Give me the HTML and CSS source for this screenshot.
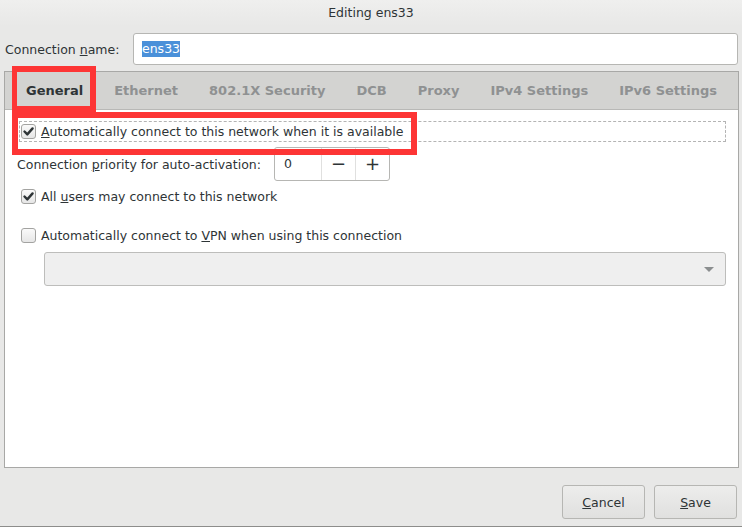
FILE: index.html
```html
<!DOCTYPE html>
<html lang="en">
<head>
    <meta charset="UTF-8">
    <title>Editing ens33</title>
    <link rel="stylesheet" href="styles.css">
</head>
<body>
    <div class="window">
        <div class="titlebar">Editing ens33</div>

        <div class="name-row">
            <label class="name-label" for="connName">Connection <u>n</u>ame:</label>
            <div class="entry"><span class="selected">ens33</span></div>
        </div>

        <div class="notebook">
            <div class="tabs">
                <div class="tab active">General</div>
                <div class="tab">Ethernet</div>
                <div class="tab">802.1X Security</div>
                <div class="tab">DCB</div>
                <div class="tab">Proxy</div>
                <div class="tab">IPv4 Settings</div>
                <div class="tab">IPv6 Settings</div>
            </div>

            <div class="page">
                <div class="check-row focused">
                    <span class="checkbox checked">
                        <svg width="13" height="13" viewBox="0 0 13 13"><path d="M2.5 6.5 L5.3 9.4 L10.6 3.4" fill="none" stroke="#2e3436" stroke-width="2.4" stroke-linecap="round" stroke-linejoin="round"/></svg>
                    </span>
                    <span><u>A</u>utomatically connect to this network when it is available</span>
                </div>

                <div class="priority-row">
                    <span>Connection <u>p</u>riority for auto-activation:</span>
                    <div class="spin">
                        <span class="spin-value">0</span>
                        <span class="spin-btn">&minus;</span>
                        <span class="spin-btn">+</span>
                    </div>
                </div>

                <div class="check-row users-row">
                    <span class="checkbox checked">
                        <svg width="13" height="13" viewBox="0 0 13 13"><path d="M2.5 6.5 L5.3 9.4 L10.6 3.4" fill="none" stroke="#2e3436" stroke-width="2.4" stroke-linecap="round" stroke-linejoin="round"/></svg>
                    </span>
                    <span>All <u>u</u>sers may connect to this network</span>
                </div>

                <div class="check-row vpn-row">
                    <span class="checkbox"></span>
                    <span>Automatically connect to <u>V</u>PN when using this connection</span>
                </div>

                <div class="combo">
                    <span class="combo-arrow"></span>
                </div>
            </div>
        </div>

        <div class="actions">
            <button class="btn"><u>C</u>ancel</button>
            <button class="btn"><u>S</u>ave</button>
        </div>

        <!-- annotation boxes drawn over the dialog -->
        <div class="mark mark-tab"></div>
        <div class="mark mark-row"></div>
    </div>
</body>
</html>
```

FILE: styles.css
```css
body {
    margin: 0;
    background-color: #e8e8e7;
    font-family: "DejaVu Sans", sans-serif;
    font-size: 12.5px;
    color: #2e3436;
}

.window {
    position: relative;
    width: 742px;
    height: 527px;
    box-sizing: border-box;
    border-bottom: 1px solid #8d8d8b;
    display: flex;
    flex-direction: column;
    overflow: hidden;
}

.titlebar {
    height: 26px;
    line-height: 26px;
    text-align: center;
    background: linear-gradient(#efefee, #e8e8e7);
}

.name-row {
    display: flex;
    align-items: center;
    padding: 7px 4px 0 5px;
}

.name-label {
    width: 128px;
}

.entry {
    flex: 1;
    height: 32px;
    box-sizing: border-box;
    border: 1px solid #b6b6b3;
    border-radius: 3px;
    background-color: #fff;
    display: flex;
    align-items: center;
    padding-left: 8px;
}

.selected {
    background-color: #4a90d9;
    color: #fff;
    line-height: 16px;
}

.notebook {
    margin: 6px 3px 0 4px;
    height: 397px;
    box-sizing: border-box;
    border: 1px solid #a8a8a6;
    display: flex;
    flex-direction: column;
}

.tabs {
    height: 38px;
    box-sizing: border-box;
    background-color: #d3d3d1;
    border-bottom: 1px solid #b8b8b6;
    display: flex;
    align-items: center;
    padding-left: 5px;
}

.tab {
    padding: 0 15.5px;
    font-size: 13px;
    font-weight: bold;
    color: #8f9192;
    white-space: nowrap;
}

.tab:first-child {
    padding-left: 16px;
}

.tab.active {
    color: #2e3436;
}

.page {
    flex: 1;
    background-color: #fff;
    padding: 11px 12px 0 12px;
}

.check-row {
    display: flex;
    align-items: center;
    gap: 5px;
    height: 21px;
    padding-left: 4px;
}

.check-row.focused {
    outline: 1px dashed #b4b4b4;
    outline-offset: -1px;
    margin-left: 2px;
    padding-left: 2px;
}

.checkbox {
    width: 15px;
    height: 15px;
    box-sizing: border-box;
    border: 1px solid #a3a3a1;
    border-radius: 3px;
    background: linear-gradient(#fafafa, #e6e6e6);
    display: flex;
    align-items: center;
    justify-content: center;
}

.priority-row {
    display: flex;
    align-items: center;
    gap: 13px;
    margin-top: 5px;
}

.spin {
    display: flex;
    height: 34px;
    box-sizing: border-box;
    border: 1px solid #b6b6b3;
    border-radius: 3px;
    background-color: #fff;
}

.spin-value {
    width: 46px;
    box-sizing: border-box;
    padding-left: 9px;
    line-height: 32px;
}

.spin-btn {
    width: 33px;
    border-left: 1px solid #e0e0df;
    text-align: center;
    line-height: 32px;
    font-size: 18px;
}

.users-row {
    margin-top: 5px;
}

.vpn-row {
    margin-top: 18px;
}

.combo {
    position: relative;
    margin: 6px 0 0 27px;
    height: 34px;
    box-sizing: border-box;
    border: 1px solid #bdbdbb;
    border-radius: 3px;
    background-color: #efefef;
}

.combo-arrow {
    position: absolute;
    right: 11px;
    top: 14px;
    border-left: 5px solid transparent;
    border-right: 5px solid transparent;
    border-top: 5px solid #8b8e8f;
}

.actions {
    flex: 1;
    display: flex;
    justify-content: flex-end;
    align-items: flex-end;
    gap: 9px;
    padding: 0 5px 7px 0;
}

.btn {
    width: 83px;
    height: 34px;
    border: 1px solid #b6b6b3;
    border-radius: 3px;
    background: linear-gradient(#ededec, #e0e0df);
    font-family: "DejaVu Sans", sans-serif;
    font-size: 12.5px;
    color: #2e3436;
}

.mark {
    position: absolute;
    border: 6px solid #fd3535;
    box-sizing: border-box;
}

.mark-tab {
    left: 12px;
    top: 66px;
    width: 84px;
    height: 46px;
    border-width: 6px 6px 6px 5px;
}

.mark-row {
    left: 12px;
    top: 112px;
    width: 405px;
    height: 43px;
}
```
